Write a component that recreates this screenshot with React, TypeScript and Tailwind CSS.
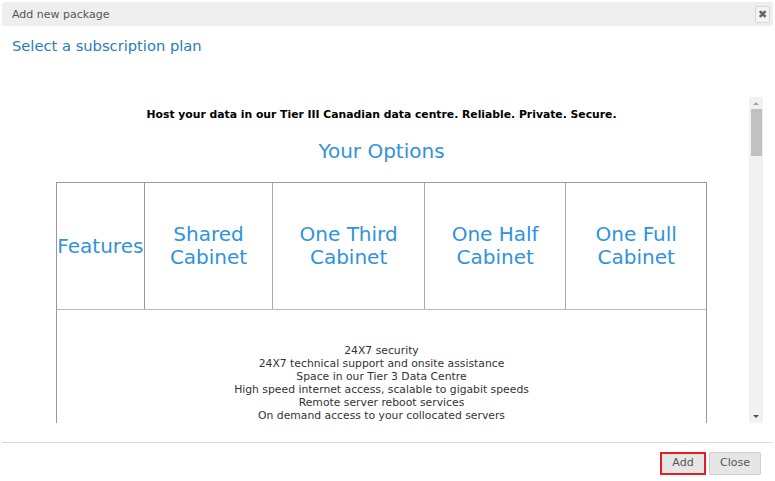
const features = [
  "24X7 security",
  "24X7 technical support and onsite assistance",
  "Space in our Tier 3 Data Centre",
  "High speed internet access, scalable to gigabit speeds",
  "Remote server reboot services",
  "On demand access to your collocated servers",
];

const plans = [
  { name: ["Shared", "Cabinet"], width: "w-[129px]" },
  { name: ["One Third", "Cabinet"], width: "w-[152px]" },
  { name: ["One Half", "Cabinet"], width: "w-[142px]" },
  { name: ["One Full", "Cabinet"], width: "w-[140px]" },
];

function Scrollbar() {
  return (
    <div className="w-[14px] h-full bg-[#f1f1f1] flex flex-col items-center">
      <div className="h-[12px] flex items-center justify-center">
        <div className="w-0 h-0 border-x-[3px] border-x-transparent border-b-[3px] border-b-[#a3a3a3]" />
      </div>
      <div className="w-[11px] h-[47px] bg-[#c1c1c1]" />
      <div className="flex-1" />
      <div className="h-[14px] flex items-center justify-center">
        <div className="w-0 h-0 border-x-[3px] border-x-transparent border-t-[3px] border-t-[#505050]" />
      </div>
    </div>
  );
}

export default function App() {
  return (
    <div className="w-[775px] h-[481px] bg-white flex flex-col font-['DejaVu_Sans',Verdana,sans-serif]">
      <header className="mx-[2px] mt-[2px] h-[24px] bg-[#eeeeee] rounded-[3px] flex items-center justify-between pl-[10px] pr-[3px]">
        <span className="text-[11px] leading-[14px] pt-[2px] text-[#555]">Add new package</span>
        <button className="w-[15px] h-[17px] border border-[#d6d6d6] rounded-[2px] bg-[#f4f4f4] flex items-center justify-center text-[11px] leading-none text-[#666]">
          ✖
        </button>
      </header>

      <h2 className="mt-[10px] ml-[12px] text-[14.7px] leading-[20px] text-[#2b7bb9]">
        Select a subscription plan
      </h2>

      <div className="mt-[41px] h-[326px] flex pl-[14px] pr-[12px]">
        <div className="flex-1 overflow-hidden flex flex-col items-center pt-[10px]">
          <p className="text-[10.8px] leading-[15px] font-bold text-black">
            Host your data in our Tier III Canadian data centre. Reliable. Private. Secure.
          </p>
          <h3 className="mt-[17px] text-[20px] leading-[24px] text-[#2f93dd]">Your Options</h3>
          <div className="mt-[19px] w-[651px] border border-[#999] shrink-0">
            <div className="flex h-[127px] border-b border-[#bbb]">
              <div className="w-[88px] flex items-center justify-center border-r border-[#999] text-[20px] text-[#2f93dd]">
                Features
              </div>
              {plans.map((plan, i) => (
                <div
                  key={plan.name[0]}
                  className={`${plan.width} flex flex-col items-center justify-center text-[20px] leading-[23px] text-[#2f93dd] ${
                    i < plans.length - 1 ? "border-r border-[#aaa]" : ""
                  }`}
                >
                  <span>{plan.name[0]}</span>
                  <span>{plan.name[1]}</span>
                </div>
              ))}
            </div>
            <div className="h-[200px] pt-[34px] flex flex-col items-center text-[10.8px] leading-[13px] text-[#333]">
              {features.map((f) => (
                <span key={f}>{f}</span>
              ))}
            </div>
          </div>
        </div>
        <Scrollbar />
      </div>

      <div className="mt-[19px] mx-[2px] border-t border-[#d9d9d9]" />

      <footer className="flex justify-end gap-[3px] pr-[14px] pt-[9px]">
        <button className="w-[46px] h-[23px] border-2 border-[#e31e24] bg-[#e6e6e6] text-[11px] text-[#555]">
          Add
        </button>
        <button className="w-[52px] h-[23px] border border-[#cfcfcf] rounded-[2px] bg-[#e6e6e6] text-[11px] text-[#555]">
          Close
        </button>
      </footer>
    </div>
  );
}
